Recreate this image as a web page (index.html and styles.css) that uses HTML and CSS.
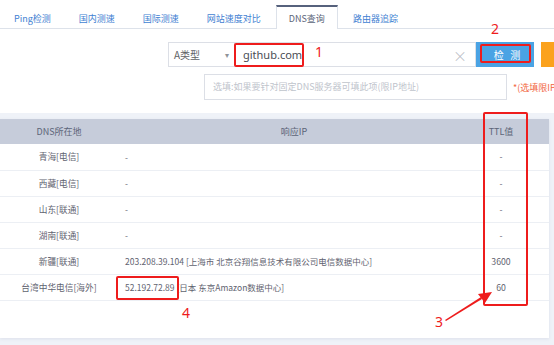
FILE: index.html
```html
<!DOCTYPE html>
<html lang="zh-CN">
<head>
    <meta charset="UTF-8">
    <title>DNS查询</title>
    <link rel="stylesheet" href="styles.css">
</head>
<body>
    <!-- Tabs -->
    <div class="tabs">
        <a class="tab">Ping检测</a>
        <a class="tab">国内测速</a>
        <a class="tab">国际测速</a>
        <a class="tab">网站速度对比</a>
        <a class="tab active">DNS查询</a>
        <a class="tab">路由器追踪</a>
    </div>

    <!-- Query form -->
    <div class="query">
        <div class="row">
            <div class="select">A类型<span class="arrow">&#9662;</span></div>
            <div class="domain">
                <span class="value">github.com</span>
                <span class="clear">&times;</span>
            </div>
            <button class="btn-check">检&nbsp;&nbsp;&nbsp;测</button>
            <div class="btn-more"></div>
        </div>
        <div class="row">
            <div class="server">选填:如果要针对固定DNS服务器可填此项(限IP地址)</div>
            <span class="hint">*(选填限IP地址)</span>
        </div>
    </div>

    <!-- Result table -->
    <div class="result">
        <div class="card">
            <table>
                <colgroup>
                    <col class="c-loc"><col class="c-ip"><col class="c-ttl"><col>
                </colgroup>
                <thead>
                    <tr><th>DNS所在地</th><th>响应IP</th><th>TTL值</th><th></th></tr>
                </thead>
                <tbody>
                    <tr><td>青海[电信]</td><td class="ip">-</td><td>-</td><td></td></tr>
                    <tr><td>西藏[电信]</td><td class="ip">-</td><td>-</td><td></td></tr>
                    <tr><td>山东[联通]</td><td class="ip">-</td><td>-</td><td></td></tr>
                    <tr><td>湖南[联通]</td><td class="ip">-</td><td>-</td><td></td></tr>
                    <tr><td>新疆[联通]</td><td class="ip">203.208.39.104 [上海市 北京谷翔信息技术有限公司电信数据中心]</td><td>3600</td><td></td></tr>
                    <tr><td>台湾中华电信[海外]</td><td class="ip">52.192.72.89 [日本 东京Amazon数据中心]</td><td>60</td><td></td></tr>
                </tbody>
            </table>
        </div>
    </div>

    <!-- Red annotations -->
    <div class="mark box1"></div>
    <div class="mark box2"></div>
    <div class="mark box3"></div>
    <div class="mark box4"></div>
    <span class="num n1">1</span>
    <span class="num n2">2</span>
    <span class="num n3">3</span>
    <span class="num n4">4</span>
    <svg class="arrow3" width="554" height="345" viewBox="0 0 554 345">
        <polygon points="446,321 482,299 481,297 445,320" fill="#ee1c1c"/>
        <polygon points="492,292 478,294 485,303" fill="#ee1c1c"/>
    </svg>
</body>
</html>
```

FILE: styles.css
```css
* {
    margin: 0;
    padding: 0;
    box-sizing: border-box;
}

body {
    width: 554px;
    height: 345px;
    overflow: hidden;
    position: relative;
    font-family: "Noto Sans CJK SC", "Noto Sans", sans-serif;
    font-size: 9px;
    color: #5f6370;
    background: #fff;
}

/* Tabs */
.tabs {
    display: flex;
    gap: 2px;
    height: 29px;
    padding: 5px 0 0 1px;
    border-bottom: 1px solid #dde2ea;
}

.tab {
    height: 24px;
    line-height: 23px;
    padding: 0 12px;
    color: #3f7fd2;
    border: 1px solid transparent;
    border-top-width: 2px;
}

.tab.active {
    color: #5b6478;
    background: #fff;
    border-color: #dde2ea;
    border-top-color: #56617c;
    border-bottom: none;
    height: 24px;
    margin-bottom: -1px;
}

/* Query form */
.query {
    padding-top: 13px;
}

.row {
    display: flex;
    align-items: center;
}

.row > * {
    flex-shrink: 0;
}

.row + .row {
    margin-top: 7px;
}

.select {
    margin-left: 168px;
    width: 66px;
    height: 25px;
    border: 1px solid #dcdfe6;
    border-right: none;
    display: flex;
    align-items: center;
    justify-content: space-between;
    padding: 0 5px 0 5px;
    font-size: 10px;
    color: #606266;
}

.select .arrow {
    font-size: 8px;
    color: #909399;
}

.domain {
    width: 242px;
    height: 25px;
    border: 1px solid #dcdfe6;
    display: flex;
    align-items: center;
    justify-content: space-between;
    padding: 0 8px 0 8px;
}

.domain .value {
    font-family: "Noto Sans", sans-serif;
    font-size: 11px;
    color: #4a4d55;
}

.domain .clear {
    font-size: 14px;
    color: #b4b8c0;
    font-weight: 300;
}

.btn-check {
    width: 58px;
    height: 25px;
    border: none;
    background: #4aa3e4;
    color: #fff;
    font-family: inherit;
    font-size: 10px;
    padding-left: 4px;
}

.btn-more {
    width: 20px;
    height: 25px;
    margin-left: 7px;
    background: #fba21d;
}

.server {
    margin-left: 204px;
    width: 303px;
    height: 26px;
    line-height: 24px;
    border: 1px solid #dcdfe6;
    padding-left: 8px;
    color: #c0c4cc;
    white-space: nowrap;
}

.hint {
    margin-left: 6px;
    color: #f2683f;
    white-space: nowrap;
}

/* Result */
.result {
    margin-top: 13px;
    padding: 6px 0 7px 0;
    background: #eff2f8;
}

.card {
    width: 549px;
    height: 219px;
    background: #fff;
    box-shadow: 0 1px 3px rgba(120, 130, 160, 0.15);
}

table {
    width: 100%;
    border-collapse: collapse;
    table-layout: fixed;
}

.c-loc { width: 118px; }
.c-ip { width: 352px; }
.c-ttl { width: 62px; }

th {
    height: 25px;
    background: #c6ccda;
    font-weight: normal;
    color: #5c6478;
    text-align: center;
}

td {
    height: 26px;
    border-bottom: 1px solid #eceff4;
    text-align: center;
    color: #5f6370;
    font-size: 8.7px;
    white-space: nowrap;
}

td.ip {
    text-align: left;
    padding-left: 7px;
    font-size: 8.5px;
}

/* Annotations */
.mark {
    position: absolute;
    border: 2px solid #ee1c1c;
    border-radius: 2px;
}

.box1 { left: 234px; top: 43px; width: 70px; height: 24px; }
.box2 { left: 480px; top: 44px; width: 51px; height: 19px; }
.box3 { left: 483px; top: 112px; width: 45px; height: 194px; }
.box4 { left: 116px; top: 276px; width: 63px; height: 24px; }

.num {
    position: absolute;
    font-family: "Noto Sans", sans-serif;
    font-size: 14px;
    line-height: 14px;
    color: #ee1c1c;
}

.n1 { left: 315px; top: 45px; }
.n2 { left: 491px; top: 22px; }
.n3 { left: 435px; top: 315px; }
.n4 { left: 182px; top: 306px; }

.arrow3 {
    position: absolute;
    left: 0;
    top: 0;
}
```
